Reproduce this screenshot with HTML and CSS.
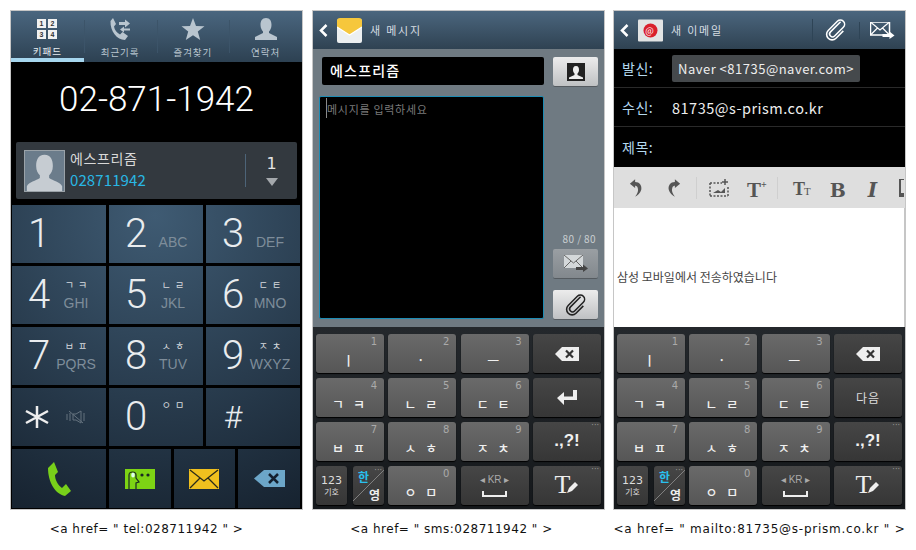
FILE: index.html
```html
<!DOCTYPE html>
<html>
  <head>
    <title>href links</title>
    <link rel="stylesheet" href="styles.css">
  </head>

  <body>
    <main class="page">
      <!-- dialer -->
      <figure class="shot">
        <div class="phone">
          <nav class="tabs">
            <div class="tab active">
              <div class="pad-icon"><b>1</b><b>2</b><b>3</b><b>4</b></div>
              <span>키패드</span>
            </div>
            <div class="tab">
              <svg class="tab-icon" viewBox="0 0 24 24"><path d="M5 1 L8 7 L6 9.500 C6.500 13 9 16 12 17.500 L14.500 15 L20 19 L17 23 C9 23 2 14 2.500 4 Z"/><path d="M11 6 h6 v-2.500 l5 4 l-5 4 v-2.500 h-6 Z M22 12.500 h-6 v-2 l-4 3 l4 3 v-2 h6 Z" transform="translate(0 -1)"/></svg>
              <span>최근기록</span>
            </div>
            <div class="tab">
              <svg class="tab-icon" viewBox="0 0 24 24"><path d="M12 1 L15 9 L23.500 9.300 L16.800 14.600 L19.200 23 L12 18.200 L4.800 23 L7.200 14.600 L0.500 9.300 L9 9 Z"/></svg>
              <span>즐겨찾기</span>
            </div>
            <div class="tab">
              <svg class="tab-icon" viewBox="0 0 24 24"><path d="M12 1 C16 1 17.500 4 17.500 8 C17.500 11 16 13.500 15 14.500 V16 L23 20 V23 H1 V20 L9 16 V14.500 C8 13.500 6.500 11 6.500 8 C6.500 4 8 1 12 1 Z"/></svg>
              <span>연락처</span>
            </div>
          </nav>

          <div class="dial-number">02-871-1942</div>

          <div class="contact">
            <div class="avatar">
              <svg viewBox="0 0 42 43"><path d="M21 4 C28 4 30 10 30 16 C30 21 28 24 26 26 V29 C30 32 38 33 40 38 V43 H2 V38 C4 33 12 32 16 29 V26 C14 24 12 21 12 16 C12 10 14 4 21 4 Z"/></svg>
            </div>
            <div class="contact-text">
              <div class="contact-name">에스프리즘</div>
              <div class="contact-num">028711942</div>
            </div>
            <div class="contact-count">
              <span>1</span>
              <i class="tri"></i>
            </div>
          </div>

          <div class="keypad">
            <div class="dial-key"><span class="digit">1</span></div>
            <div class="dial-key"><span class="digit">2</span><div class="sub"><em>ABC</em></div></div>
            <div class="dial-key"><span class="digit">3</span><div class="sub"><em>DEF</em></div></div>
            <div class="dial-key"><span class="digit">4</span><div class="sub"><u>ㄱㅋ</u><em>GHI</em></div></div>
            <div class="dial-key"><span class="digit">5</span><div class="sub"><u>ㄴㄹ</u><em>JKL</em></div></div>
            <div class="dial-key"><span class="digit">6</span><div class="sub"><u>ㄷㅌ</u><em>MNO</em></div></div>
            <div class="dial-key"><span class="digit">7</span><div class="sub"><u>ㅂㅍ</u><em>PQRS</em></div></div>
            <div class="dial-key"><span class="digit">8</span><div class="sub"><u>ㅅㅎ</u><em>TUV</em></div></div>
            <div class="dial-key"><span class="digit">9</span><div class="sub"><u>ㅈㅊ</u><em>WXYZ</em></div></div>
            <div class="dial-key">
              <span class="digit">
                <svg class="star-icon" viewBox="0 0 24 22"><path d="M12 0 V22 M1 5 L23 17 M1 17 L23 5"/></svg>
              </span>
              <div class="sub mid">
                <svg class="mute-icon" viewBox="0 0 20 14"><path d="M1 4 V10 M4 3 V11 M7 4 V10 H10 L15 13 V1 L10 4 H7 M18 3 V11 M3 1 L17 13"/></svg>
              </div>
            </div>
            <div class="dial-key"><span class="digit">0</span><div class="sub top"><u>ㅇㅁ</u></div></div>
            <div class="dial-key"><span class="digit hash">#</span></div>
            <div class="action-row">
              <div class="dial-key center">
                <svg class="call-icon" viewBox="0 0 24 34"><path d="M7 0 L11 10 L8 13 C8 18 11 23 15 26 L19 22 L24 29 L18 34 C8 32 1 20 1 6 Z"/></svg>
              </div>
              <div class="dial-key center">
                <svg class="vcall-icon" viewBox="0 0 30 20"><rect width="30" height="20" fill="#7dd314"/><path d="M4 20 V6 C4 2 11 2 11 6 V9 L14 13 L11 14 V20" fill="#7dd314" stroke="#1a2a22" stroke-width="1.200"/><ellipse cx="8" cy="6" rx="1.800" ry="2.500" fill="#dfe"/><circle cx="17" cy="6" r="1.600" fill="#1a2a22"/><circle cx="23" cy="6" r="1.600" fill="#1a2a22"/></svg>
              </div>
              <div class="dial-key center">
                <svg class="mail-icon" viewBox="0 0 30 20"><rect width="30" height="20" fill="#f0c01e"/><path d="M1 1 L15 12 L29 1 M1 19 L11 9 M29 19 L19 9" fill="none" stroke="#2a2a1a" stroke-width="1.300"/></svg>
              </div>
              <div class="dial-key center">
                <svg class="back-icon" viewBox="0 0 31 17"><path d="M10 0 H31 V17 H10 L0 8.500 Z" fill="#6ca6c8"/><path d="M15 4 L24 13 M24 4 L15 13" stroke="#14202e" stroke-width="2.500"/></svg>
              </div>
            </div>
          </div>
        </div>
        <figcaption class="cap-tel">&lt;a href= " tel:028711942 " &gt;</figcaption>
      </figure>

      <!-- sms -->
      <figure class="shot">
        <div class="phone">
          <header class="bar">
            <svg class="chevron" viewBox="0 0 9 13"><path d="M7.500 1 L2 6.500 L7.500 12"/></svg>
            <svg class="app-icon" viewBox="0 0 25 25"><rect y="1" width="25" height="24" rx="2" fill="#eceff0"/><path d="M0 3 Q0 0 3 0 H22 Q25 0 25 3 V9 L12.500 17 L0 9 Z" fill="#f6c73c"/><path d="M0 9 L12.500 17 L25 9" fill="none" stroke="#fff" stroke-width="1.200"/></svg>
            <span class="bar-title">새 메시지</span>
          </header>
          <div class="compose">
            <div class="compose-main">
              <div class="to-field">에스프리즘</div>
              <div class="msg-box"><i class="caret"></i>메시지를 입력하세요</div>
            </div>
            <div class="compose-side">
              <div class="btn">
                <svg class="btn-contact" viewBox="0 0 18 18"><rect width="18" height="18" fill="#222"/><path d="M9 3 C11.500 3 12 5 12 7 C12 9 11 10 10.500 10.500 V12 L16 14.500 V16 H2 V14.500 L7.500 12 V10.500 C7 10 6 9 6 7 C6 5 6.500 3 9 3 Z" fill="#eee"/></svg>
              </div>
              <div class="counter">80 / 80</div>
              <div class="btn off">
                <svg class="send-icon" viewBox="0 0 24 17"><rect width="19" height="13" fill="#d4d8da"/><path d="M0 0 L9.500 8 L19 0 M0 13 L7 6 M19 13 L12 6" fill="none" stroke="#666" stroke-width="1"/><path d="M12 12 H19 V9.500 L24 13.500 L19 17 V15 H12 Z" fill="#444"/></svg>
              </div>
              <div class="btn">
                <svg class="clip-icon" viewBox="0 0 24 24"><path d="M17 3 L6 14 A3 3 0 0 0 10.500 18.500 L20 9 A4.500 4.500 0 0 0 13.500 2.500 L3.500 12.500 A6 6 0 0 0 12 21 L20 13"/></svg>
              </div>
            </div>
          </div>
          <div class="keyboard">
            <div class="key"><small>1</small><b>ㅣ</b></div>
            <div class="key"><small>2</small><b>·</b></div>
            <div class="key"><small>3</small><b>ㅡ</b></div>
            <div class="key dark center">
              <svg class="kb-del" viewBox="0 0 24 14"><path d="M7 0 H24 V14 H7 L0 7 Z" fill="#eee"/><path d="M11 3.500 L18 10.500 M18 3.500 L11 10.500" stroke="#333" stroke-width="2.200"/></svg>
            </div>
            <div class="key"><small>4</small><b>ㄱ ㅋ</b></div>
            <div class="key"><small>5</small><b>ㄴ ㄹ</b></div>
            <div class="key"><small>6</small><b>ㄷ ㅌ</b></div>
            <div class="key dark center">
              <svg class="kb-enter" viewBox="0 0 20 16"><path d="M20 0 V10 H7 V15 L0 8 L7 2 V6.500 H16 V0 Z" fill="#eee"/></svg>
            </div>
            <div class="key"><small>7</small><b>ㅂ ㅍ</b></div>
            <div class="key"><small>8</small><b>ㅅ ㅎ</b></div>
            <div class="key"><small>9</small><b>ㅈ ㅊ</b></div>
            <div class="key dark"><small class="dots">···</small><b class="punct">.,?!</b></div>
            <div class="split">
              <div class="key dark center sym"><span>123</span><span class="sym-ko">기호</span></div>
              <div class="key dark lang"><span class="han">한</span><small class="dots">···</small><span class="yeong">영</span></div>
            </div>
            <div class="key"><small>0</small><b>ㅇ ㅁ</b></div>
            <div class="key dark center space">
              <span>◂ KR ▸</span>
              <i class="space-bar"></i>
            </div>
            <div class="key dark">
              <small class="dots">···</small>
              <div class="tool"><span>T</span><svg viewBox="0 0 12 12"><path d="M0 12 L2 7 L8 1 L11 4 L5 10 Z" fill="#eee"/></svg></div>
            </div>
          </div>
        </div>
        <figcaption class="cap-sms">&lt;a href= " sms:028711942 " &gt;</figcaption>
      </figure>

      <!-- email -->
      <figure class="shot">
        <div class="phone">
          <header class="bar">
            <svg class="chevron" viewBox="0 0 9 13"><path d="M7.500 1 L2 6.500 L7.500 12"/></svg>
            <svg class="app-icon" viewBox="0 0 25 22"><rect width="25" height="22" rx="1" fill="#e2e4e4"/><circle cx="12.500" cy="11" r="7" fill="#d9202c"/><text x="12.500" y="14" font-size="9" fill="#fff" text-anchor="middle">@</text></svg>
            <span class="bar-title">새 이메일</span>
            <span class="bar-actions">
              <svg class="clip-icon white" viewBox="0 0 24 24"><path d="M17 3 L6 14 A3 3 0 0 0 10.500 18.500 L20 9 A4.500 4.500 0 0 0 13.500 2.500 L3.500 12.500 A6 6 0 0 0 12 21 L20 13"/></svg>
              <svg class="send-icon" viewBox="0 0 24 17"><rect width="19" height="13" fill="none" stroke="#fff" stroke-width="1.500"/><path d="M0 0 L9.500 8 L19 0 M0 13 L7 6 M19 13 L12 6" fill="none" stroke="#fff" stroke-width="1.200"/><path d="M12 12 H19 V9.500 L24 13.500 L19 17 V15 H12 Z" fill="#fff"/></svg>
            </span>
          </header>
          <div class="mail-row">
            <label>발신:</label>
            <span class="chip">Naver &lt;81735@naver.com&gt;</span>
          </div>
          <div class="mail-row">
            <label>수신:</label>
            <span class="mail-to">81735@s-prism.co.kr</span>
          </div>
          <div class="mail-row last">
            <label>제목:</label>
          </div>
          <div class="toolbar">
            <svg class="tool-icon" viewBox="0 0 16 20"><path d="M1 5 L7 0 V3 C12 3 15 7 14 12 C13 16 10 18 7 20 C10 16 11 13 10 10 C9.500 8 8 7.500 7 7.500 V10 Z"/></svg>
            <svg class="tool-icon redo" viewBox="0 0 16 20"><path d="M15 5 L9 0 V3 C4 3 1 7 2 12 C3 16 6 18 9 20 C6 16 5 13 6 10 C6.500 8 8 7.500 9 7.500 V10 Z"/></svg>
            <i class="tool-sep"></i>
            <svg class="tool-icon img" viewBox="0 0 20 18"><path d="M1 4 H13 M1 17 H19 M1 4 V17 M19 8 V17" fill="none" stroke="#555" stroke-width="1.500" stroke-dasharray="2 1.500"/><path d="M4 14 L9 11 L12 13 L16 9 V14 Z"/><path d="M16 0 V6 M13 3 H19" stroke="#555" stroke-width="1.500"/></svg>
            <span class="tt plus">T<sup>+</sup></span>
            <i class="tool-sep"></i>
            <span class="tt size">T<small>T</small></span>
            <span class="tt bold">B</span>
            <span class="tt ital">I</span>
            <span class="tool-cut"></span>
          </div>
          <div class="mail-body">삼성 모바일에서 전송하였습니다</div>
          <div class="keyboard">
            <div class="key"><small>1</small><b>ㅣ</b></div>
            <div class="key"><small>2</small><b>·</b></div>
            <div class="key"><small>3</small><b>ㅡ</b></div>
            <div class="key dark center">
              <svg class="kb-del" viewBox="0 0 24 14"><path d="M7 0 H24 V14 H7 L0 7 Z" fill="#eee"/><path d="M11 3.500 L18 10.500 M18 3.500 L11 10.500" stroke="#333" stroke-width="2.200"/></svg>
            </div>
            <div class="key"><small>4</small><b>ㄱ ㅋ</b></div>
            <div class="key"><small>5</small><b>ㄴ ㄹ</b></div>
            <div class="key"><small>6</small><b>ㄷ ㅌ</b></div>
            <div class="key dark center"><span class="next">다음</span></div>
            <div class="key"><small>7</small><b>ㅂ ㅍ</b></div>
            <div class="key"><small>8</small><b>ㅅ ㅎ</b></div>
            <div class="key"><small>9</small><b>ㅈ ㅊ</b></div>
            <div class="key dark"><small class="dots">···</small><b class="punct">.,?!</b></div>
            <div class="split">
              <div class="key dark center sym"><span>123</span><span class="sym-ko">기호</span></div>
              <div class="key dark lang"><span class="han">한</span><small class="dots">···</small><span class="yeong">영</span></div>
            </div>
            <div class="key"><small>0</small><b>ㅇ ㅁ</b></div>
            <div class="key dark center space">
              <span>◂ KR ▸</span>
              <i class="space-bar"></i>
            </div>
            <div class="key dark">
              <small class="dots">···</small>
              <div class="tool"><span>T</span><svg viewBox="0 0 12 12"><path d="M0 12 L2 7 L8 1 L11 4 L5 10 Z" fill="#eee"/></svg></div>
            </div>
          </div>
        </div>
        <figcaption class="cap-mail">&lt;a href= " mailto:81735@s-prism.co.kr " &gt;</figcaption>
      </figure>
    </main>
  </body>
</html>
```

FILE: styles.css
```css
html,
body {
  margin: 0;
  height: 550px;
  overflow: hidden;
  background: white;
}
body {
  font-family: "Noto Sans CJK KR", "Noto Sans", sans-serif;
}
.page {
  display: grid;
  grid-template-columns: 302px 301px 293px;
  padding: 10px 0 0 10px;
}
.shot {
  margin: 0;
  width: 293px;
}
.phone {
  width: 291px;
  height: 498px;
  border: 1px solid #c6c6c6;
  display: flex;
  flex-direction: column;
  background: black;
  overflow: hidden;
}
figcaption {
  font-family: "DejaVu Sans", sans-serif;
  font-size: 12px;
  letter-spacing: 0.5px;
  color: #111;
  text-align: center;
  margin-top: 12px;
}
.cap-tel {
  padding-right: 20px;
}
.cap-sms {
  padding-right: 14px;
}
.cap-mail {
  letter-spacing: 0.75px;
}

/* dialer tabs */
.tabs {
  display: flex;
  height: 51px;
  background: linear-gradient(#4a667f, #2d4152);
  flex: none;
}
.tab {
  flex: 1;
  position: relative;
  display: flex;
  flex-direction: column;
  align-items: center;
  padding-top: 6px;
  box-sizing: border-box;
  color: #b9c5cf;
  font-size: 9.500px;
  letter-spacing: 1px;
  line-height: 12px;
}
.tab + .tab::before {
  content: "";
  position: absolute;
  left: 0;
  top: 9px;
  height: 33px;
  width: 1px;
  background: #3c5469;
}
.tab span {
  margin-top: 5px;
}
.tab.active {
  color: #e8eef2;
  border-bottom: 4px solid #a6d6ee;
}
.tab-icon {
  width: 24px;
  height: 24px;
  fill: #b9c5cf;
  display: block;
}
.pad-icon {
  width: 20px;
  height: 20px;
  display: grid;
  grid-template-columns: 1fr 1fr;
  gap: 2px;
  margin: 2px 0 1px;
}
.pad-icon b {
  background: #f1f1f1;
  color: #333;
  font: bold 7px/9px "Liberation Sans", sans-serif;
  text-align: center;
}

/* number and contact */
.dial-number {
  height: 80px;
  flex: none;
  color: white;
  font: 300 35px/76px Roboto, sans-serif;
  text-align: center;
}
.contact {
  flex: none;
  margin: 0 5px 6px;
  height: 57px;
  background: #33393f;
  border-radius: 2px;
  display: flex;
  align-items: center;
  padding-left: 8px;
}
.avatar {
  width: 41px;
  height: 42px;
  border: 1px solid #9aa2a8;
  background: #6b7c8b;
  box-sizing: border-box;
}
.avatar svg {
  display: block;
  width: 100%;
  height: 100%;
  fill: #c6ccd2;
}
.contact-text {
  margin: -3px 0 0 5px;
  flex: 1;
}
.contact-name {
  color: #d8d8d8;
  font-size: 14px;
  line-height: 21px;
  letter-spacing: 0.6px;
}
.contact-num {
  color: #29b7e4;
  font-size: 15px;
  line-height: 21px;
  letter-spacing: 0.1px;
}
.contact-count {
  width: 51px;
  height: 33px;
  border-left: 1px solid #4d6478;
  color: #e4e4e4;
  font: 16px/20px "DejaVu Sans", sans-serif;
  display: flex;
  flex-direction: column;
  align-items: center;
}
.tri {
  margin-top: 4px;
  width: 0;
  border-left: 6px solid transparent;
  border-right: 6px solid transparent;
  border-top: 8px solid #a4a8ac;
}

/* dial keys */
.keypad {
  flex: none;
  display: grid;
  grid-template-columns: repeat(3, 94px);
  grid-auto-rows: 58px;
  gap: 3px;
  padding-left: 1px;
}
.dial-key {
  background: radial-gradient(circle at 155px 215px, #3f5b73, #16222f 330px) fixed;
  display: flex;
  align-items: center;
}
.dial-key.center {
  justify-content: center;
}
.digit {
  width: 28px;
  margin-left: 13px;
  flex: none;
  text-align: center;
  color: #e9ecee;
  font: 300 40px/58px Roboto, sans-serif;
}
.digit.hash {
  font-size: 32px;
}
.sub {
  width: 50px;
  height: 34px;
  margin-left: -2px;
  display: flex;
  flex-direction: column;
  align-items: center;
  justify-content: flex-end;
}
.sub.top {
  justify-content: flex-start;
  margin-top: -3px;
}
.sub.mid {
  justify-content: center;
}
.sub em {
  font: 14px/17px "Liberation Sans", sans-serif;
  color: #7e8d9a;
}
.sub u {
  text-decoration: none;
  color: #d6dade;
  font-size: 10px;
  line-height: 11px;
  letter-spacing: 4px;
  margin-bottom: 5px;
  padding-left: 4px;
}
.star-icon {
  width: 24px;
  height: 22px;
  stroke: #eee;
  stroke-width: 2.500;
  fill: none;
  display: block;
}
.mute-icon {
  width: 20px;
  height: 14px;
  stroke: #64727e;
  stroke-width: 1;
  fill: none;
}
.action-row {
  grid-column: 1 / -1;
  display: grid;
  grid-template-columns: 94px 1fr 1fr 1fr;
  gap: 3px;
  height: 59px;
}
.call-icon {
  width: 24px;
  height: 34px;
  fill: #78d01a;
}
.vcall-icon,
.mail-icon {
  width: 30px;
  height: 20px;
}
.back-icon {
  width: 31px;
  height: 17px;
}

/* top bar of sms and email */
.bar {
  flex: none;
  height: 38px;
  background: linear-gradient(#4b667e, #2f4252);
  display: flex;
  align-items: center;
  padding-left: 6px;
  color: #d6dde2;
  font-size: 11px;
  letter-spacing: 1.800px;
}
.chevron {
  width: 9px;
  height: 13px;
  fill: none;
  stroke: white;
  stroke-width: 2.500;
}
.app-icon {
  width: 25px;
  height: 25px;
  margin: 0 8px 0 9px;
}
.bar-actions {
  margin-left: auto;
  display: flex;
  align-items: center;
  height: 26px;
}
.bar-actions .clip-icon {
  border-left: 1px solid #2e4456;
  padding: 0 12px 0 12px;
}
.bar-actions .send-icon {
  border-left: 1px solid #2e4456;
  padding: 0 10px 0 10px;
  width: 25px;
}

/* sms compose */
.compose {
  flex: none;
  height: 278px;
  background: #6f7a82;
  display: flex;
  box-sizing: border-box;
  padding: 8px 6px 8px;
}
.compose-main {
  width: 225px;
}
.to-field {
  margin-left: 3px;
  height: 28px;
  background: black;
  border-radius: 2px;
  color: white;
  font-size: 14px;
  font-weight: 500;
  line-height: 27px;
  letter-spacing: 1.200px;
  padding-left: 8px;
  box-sizing: border-box;
}
.msg-box {
  margin-top: 11px;
  height: 223px;
  box-sizing: border-box;
  background: black;
  border: 1px solid #1d8cb4;
  border-radius: 2px;
  color: #7a7a7a;
  font-size: 11px;
  letter-spacing: 0.7px;
  line-height: 22px;
  padding: 1px 0 0 7px;
  display: flex;
  align-items: flex-start;
}
.caret {
  width: 1px;
  height: 20px;
  background: #8a8a8a;
  margin-left: -1px;
}
.compose-side {
  margin-left: 9px;
  width: 45px;
  display: flex;
  flex-direction: column;
}
.btn {
  height: 29px;
  background: linear-gradient(#ececec, #bfc1c3);
  border-radius: 2px;
  box-shadow: 0 1px 0 #555b60;
  display: flex;
  align-items: center;
  justify-content: center;
}
.btn.off {
  background: linear-gradient(#9a9fa3, #82888d);
}
.btn-contact {
  width: 18px;
  height: 18px;
}
.counter {
  margin: auto 2px 4px 0;
  color: #c9ced1;
  font-size: 10px;
  line-height: 12px;
  letter-spacing: 0.4px;
  text-align: right;
}
.off + .btn {
  margin-top: 12px;
}
.send-icon {
  width: 24px;
  height: 17px;
}
.clip-icon {
  width: 22px;
  height: 22px;
  fill: none;
  stroke: #222;
  stroke-width: 1.700;
}
.clip-icon.white {
  stroke: white;
}

/* email fields */
.mail-row {
  flex: none;
  height: 39px;
  border-bottom: 1px solid #2a2a2a;
  box-sizing: border-box;
  display: flex;
  align-items: center;
  color: #eee;
  font-size: 14.500px;
  padding-left: 8px;
}
.mail-row.last {
  height: 40px;
  border: 0;
}
.mail-row label {
  width: 50px;
  color: #b4d8ee;
  font-size: 14px;
  letter-spacing: 0.5px;
}
.chip {
  background: #45494c;
  height: 27px;
  line-height: 27px;
  padding: 0 6px;
  border-radius: 2px;
  font-size: 13px;
  letter-spacing: 0.5px;
}
.mail-to {
  letter-spacing: 0.5px;
}
.toolbar {
  flex: none;
  height: 41px;
  background: #dedede;
  display: flex;
  align-items: center;
  color: #555;
  padding-left: 15px;
  overflow: hidden;
}
.tool-icon {
  width: 14px;
  height: 18px;
  fill: #555;
}
.tool-icon.redo {
  margin-left: 24px;
}
.tool-icon.img {
  width: 20px;
  height: 18px;
  margin-left: 12px;
}
.tool-sep {
  width: 1px;
  height: 22px;
  background: #cfcfcf;
  margin-left: 15px;
}
.tt {
  font: bold 18px/24px "Liberation Serif", serif;
  margin-top: 4px;
}
.tt.plus {
  margin-left: 18px;
  font-size: 21px;
  width: 27px;
}
.tt.plus sup {
  font-size: 10px;
  vertical-align: 9px;
  line-height: 0;
}
.plus + .tool-sep {
  margin-left: 3px;
}
.tt.size {
  margin-left: 15px;
  font-size: 18px;
}
.tt.size small {
  font-size: 11px;
  font-weight: normal;
  margin-left: -1px;
}
.tt.bold {
  margin-left: 19px;
  font-size: 19px;
  font-family: "DejaVu Serif", serif;
}
.tt.ital {
  margin-left: 22px;
  font-size: 20px;
  font-style: italic;
  font-family: "DejaVu Serif", serif;
}
.tool-cut {
  margin-left: 22px;
  width: 5px;
  height: 18px;
  flex: none;
  border: 2px solid #555;
  border-right: 0;
  border-top-width: 1px;
  border-bottom-width: 4px;
  box-sizing: border-box;
}
.mail-body {
  flex: none;
  height: 119px;
  background: white;
  color: #444;
  font-size: 12px;
  line-height: 138px;
  padding-left: 3px;
  box-sizing: border-box;
  border-right: 1px solid #c6c6c6;
}

/* keyboard */
.keyboard {
  flex: 1;
  background: linear-gradient(#24282c, #15181b);
  display: grid;
  grid-template-columns: repeat(4, 68px);
  grid-auto-rows: 39px;
  gap: 5px 4.330px;
  padding: 7px 3px 0;
  box-sizing: border-box;
}
.key {
  background: linear-gradient(#6a6a6a, #565656);
  border-radius: 3px;
  box-shadow: 0 1px 1px #000;
  display: flex;
  flex-direction: column;
  color: #f0f0f0;
  min-width: 0;
}
.key.dark {
  background: linear-gradient(#464646, #363636);
}
.key.center {
  align-items: center;
  justify-content: center;
}
.key small {
  align-self: flex-end;
  margin: 2px 7px 0 0;
  font: 10px/11px "DejaVu Sans", sans-serif;
  color: #aaa;
}
.key small.dots {
  margin: 0 2px 0 0;
  font-size: 8px;
  line-height: 7px;
  color: #999;
  letter-spacing: 0;
}
.key b {
  text-align: center;
  font-size: 13px;
  line-height: 18px;
  font-weight: 500;
  margin-top: 4px;
  letter-spacing: 3px;
}
.key b.punct {
  font: bold 17px/24px "Liberation Sans", sans-serif;
  margin-top: 0;
  letter-spacing: 0;
}
.kb-del {
  width: 24px;
  height: 14px;
}
.kb-enter {
  width: 20px;
  height: 16px;
}
.next {
  font-size: 12px;
  letter-spacing: 1px;
  color: #ddd;
}
.split {
  display: grid;
  grid-template-columns: 31px 31px;
  gap: 6px;
}
.sym {
  font: 11px/12px "DejaVu Sans", sans-serif;
  color: #ddd;
}
.sym-ko {
  font: 8px/9px "Noto Sans CJK KR", sans-serif;
}
.lang {
  position: relative;
  background: linear-gradient(135deg, transparent 49%, #808080 50%, transparent 51%), linear-gradient(#464646, #363636) !important;
}
.lang .dots {
  position: absolute;
  right: 0;
  top: 1px;
}
.han {
  position: absolute;
  left: 5px;
  top: 3px;
  color: #29c0ee;
  font-size: 12px;
  font-weight: 700;
  line-height: 16px;
}
.yeong {
  position: absolute;
  right: 4px;
  bottom: 2px;
  color: #eee;
  font-size: 12px;
  font-weight: 700;
  line-height: 16px;
}
.space {
  color: #aaa;
  font: 10px/12px "Liberation Sans", sans-serif;
}
.space-bar {
  margin-top: 5px;
  width: 25px;
  height: 6px;
  box-sizing: border-box;
  border: 2px solid #eee;
  border-top: 0;
}
.tool {
  display: flex;
  align-items: flex-end;
  justify-content: center;
  color: #eee;
  font: 26px/26px "Liberation Serif", serif;
  margin-top: -1px;
}
.tool svg {
  width: 12px;
  height: 12px;
  margin: 0 0 5px -3px;
}
```
